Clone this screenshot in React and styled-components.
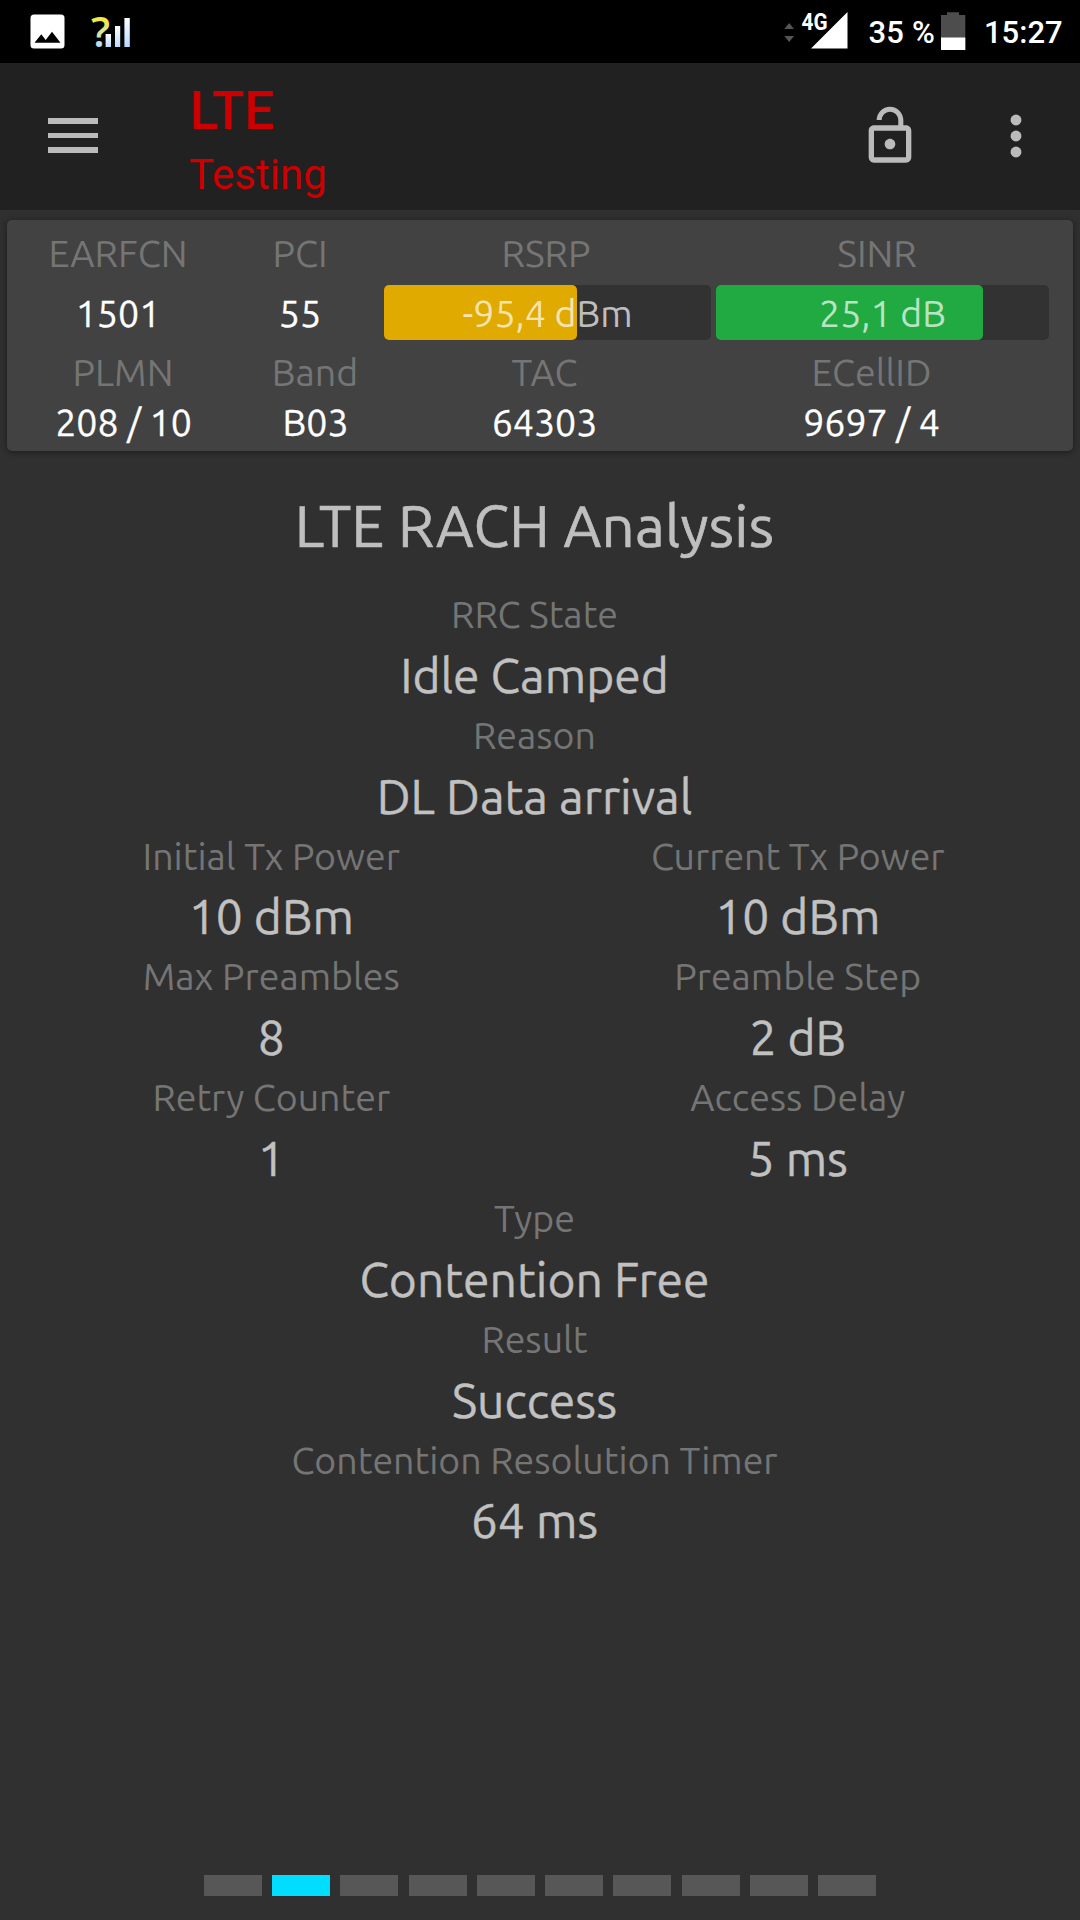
import React from 'react';
import styled, { createGlobalStyle } from 'styled-components';

const cellLabels = ['EARFCN', 'PCI', 'RSRP', 'SINR'];
const cellIds = ['1501', '55'];

const meters = [
  { reading: '-95,4 dBm', color: '#e0aa00', percent: 59.1 },
  { reading: '25,1 dB', color: '#22aa42', percent: 80.2 },
];

const networkLabels = ['PLMN', 'Band', 'TAC', 'ECellID'];
const networkValues = ['208 / 10', 'B03', '64303', '9697 / 4'];

const rachRows = [
  [{ label: 'RRC State', value: 'Idle Camped' }],
  [{ label: 'Reason', value: 'DL Data arrival' }],
  [
    { label: 'Initial Tx Power', value: '10 dBm' },
    { label: 'Current Tx Power', value: '10 dBm' },
  ],
  [
    { label: 'Max Preambles', value: '8' },
    { label: 'Preamble Step', value: '2 dB' },
  ],
  [
    { label: 'Retry Counter', value: '1' },
    { label: 'Access Delay', value: '5 ms' },
  ],
  [{ label: 'Type', value: 'Contention Free' }],
  [{ label: 'Result', value: 'Success' }],
  [{ label: 'Contention Resolution Timer', value: '64 ms' }],
];

const PAGE_COUNT = 10;
const ACTIVE_PAGE = 1;

const StatusBar = () => (
  <StyledStatusBar>
    <svg width="140" height="63" viewBox="0 0 140 63">
      <defs>
        <linearGradient id="question" x1="0" y1="0" x2="0" y2="1">
          <stop offset="0.25" stopColor="#ffe92e" />
          <stop offset="0.8" stopColor="#b5dcff" />
        </linearGradient>
        <linearGradient id="bars" x1="0" y1="0" x2="0" y2="1">
          <stop offset="0" stopColor="#fff" />
          <stop offset="1" stopColor="#b9dbff" />
        </linearGradient>
      </defs>
      <rect x="30.5" y="14.5" width="34" height="34" rx="3.5" fill="#fff" />
      <path d="M34.5 42.7 41.3 34.3 45.7 40 52 31.8 60.5 42.7Z" fill="#000" />
      <text x="91" y="46.5" className="question" fill="url(#question)">
        ?
      </text>
      <rect x="105.6" y="34" width="5.4" height="13" fill="url(#bars)" />
      <rect x="115" y="26" width="5.2" height="21" fill="url(#bars)" />
      <rect x="124.4" y="18" width="5.4" height="29" fill="url(#bars)" />
    </svg>
    <StatusRight>
      <svg width="64" height="63" viewBox="784 0 64 63">
        <path d="M784.3 29 789.2 23 794 29ZM784.3 36 789.2 42 794 36Z" fill="#555" />
        <path d="M811 48.5 847.5 12V48.5Z" fill="#fff" />
        <text x="801.5" y="30" className="network" textLength="26" lengthAdjust="spacingAndGlyphs">
          4G
        </text>
      </svg>
      <BatteryText>35 %</BatteryText>
      <svg width="25" height="63" viewBox="941 0 25 63">
        <path d="M947 12.3h12v2.7h6.3v35h-24.3v-35h6z" fill="#4d4d4d" />
        <path d="M941 37.5h24.3v12.5h-24.3z" fill="#fff" />
      </svg>
      <Clock>15:27</Clock>
    </StatusRight>
  </StyledStatusBar>
);

const Toolbar = () => (
  <StyledToolbar>
    <MenuButton aria-label="Menu">
      <span />
      <span />
      <span />
    </MenuButton>
    <Titles>
      <h1>LTE</h1>
      <h2>Testing</h2>
    </Titles>
    <ToolbarIcon viewBox="0 0 24 24">
      <path d="M12 17c1.1 0 2-.9 2-2s-.9-2-2-2-2 .9-2 2 .9 2 2 2zm6-9h-1V6c0-2.76-2.24-5-5-5S7 3.24 7 6h1.9c0-1.71 1.39-3.1 3.1-3.1 1.71 0 3.1 1.39 3.1 3.1v2H6c-1.1 0-2 .9-2 2v10c0 1.1.9 2 2 2h12c1.1 0 2-.9 2-2V10c0-1.1-.9-2-2-2zm0 12H6V10h12v10z" />
    </ToolbarIcon>
    <ToolbarIcon viewBox="0 0 24 24">
      <circle cx="12" cy="6" r="2.05" />
      <circle cx="12" cy="12" r="2.05" />
      <circle cx="12" cy="18" r="2.05" />
    </ToolbarIcon>
  </StyledToolbar>
);

const CellCard = () => (
  <StyledCellCard>
    <CardRow $columns="196px 168px 324px 338px">
      {cellLabels.map(item => (
        <CardLabel key={item}>{item}</CardLabel>
      ))}
    </CardRow>
    <MeterRow>
      {cellIds.map(item => (
        <CardValue key={item}>{item}</CardValue>
      ))}
      {meters.map(({ reading, color, percent }) => (
        <Meter key={reading} $color={color} $percent={percent}>
          <span>{reading}</span>
        </Meter>
      ))}
    </MeterRow>
    <CardRow $columns="206px 178px 281px 373px">
      {networkLabels.map(item => (
        <CardLabel key={item}>{item}</CardLabel>
      ))}
    </CardRow>
    <CardRow $columns="207px 177px 281px 373px" $gap={6}>
      {networkValues.map(item => (
        <CardValue key={item}>{item}</CardValue>
      ))}
    </CardRow>
  </StyledCellCard>
);

const App = () => (
  <Screen>
    <GlobalStyle />
    <StatusBar />
    <Toolbar />
    <CellCard />
    <Analysis>
      <Heading>LTE RACH Analysis</Heading>
      {rachRows.map(row => (
        <FieldRow key={row[0].label}>
          {row.map(({ label, value }) => (
            <Field key={label}>
              <FieldLabel>{label}</FieldLabel>
              <FieldValue>{value}</FieldValue>
            </Field>
          ))}
        </FieldRow>
      ))}
    </Analysis>
    <Pager>
      {Array.from({ length: PAGE_COUNT }, (_, i) => (
        <PagerMark key={i} $active={i === ACTIVE_PAGE} />
      ))}
    </Pager>
  </Screen>
);

const GlobalStyle = createGlobalStyle`
  * {
    box-sizing: border-box;
  }
  body {
    margin: 0;
    background: #303030;
  }
  h1, h2, p {
    margin: 0;
    font-weight: 400;
  }
`;

const Screen = styled.div`
  display: flex;
  flex-direction: column;
  width: 1080px;
  height: 1920px;
  overflow: hidden;
  background: #303030;
  font-family: Ubuntu, 'Noto Sans', sans-serif;
`;

const StyledStatusBar = styled.div`
  display: flex;
  justify-content: space-between;
  height: 63px;
  background: #000;
  color: #fff;
  font-family: Roboto, sans-serif;
  .question {
    font-family: 'Open Sans', sans-serif;
    font-size: 42px;
    font-weight: 600;
  }
  .network {
    font-size: 24px;
    font-weight: 700;
    fill: #fff;
    stroke: #000;
    stroke-width: 3px;
    paint-order: stroke;
  }
`;

const StatusRight = styled.div`
  display: flex;
  width: 296px;
  font-size: 31px;
  font-weight: 500;
  line-height: 66px;
  white-space: pre;
`;

const BatteryText = styled.span`
  width: 93px;
  padding-left: 20.5px;
  letter-spacing: 0.2px;
`;

const Clock = styled.span`
  padding-left: 18px;
`;

const StyledToolbar = styled.header`
  display: flex;
  height: 147px;
  padding: 0 32px 0 48px;
  background: #212121;
`;

const MenuButton = styled.button`
  display: flex;
  flex-direction: column;
  justify-content: center;
  gap: 9px;
  width: 50px;
  height: 147px;
  padding: 0 0 2px;
  border: 0;
  background: none;
  span {
    height: 5.5px;
    background: #bbb;
  }
`;

const Titles = styled.div`
  flex: 1;
  padding: 17px 0 0 91px;
  color: #c00;
  font-family: Roboto, sans-serif;
  h1 {
    margin-bottom: 8px;
    padding-left: 1px;
    font-size: 53px;
    font-weight: 500;
    line-height: 62px;
  }
  h2 {
    font-size: 42px;
    line-height: 50px;
  }
`;

const ToolbarIcon = styled.svg`
  width: 64px;
  height: 64px;
  margin-top: 40.5px;
  fill: #bbb;
  & + & {
    margin-left: 62px;
  }
`;

const StyledCellCard = styled.section`
  height: 231px;
  margin: 10px 7px 0;
  padding: 11px 0 0 13px;
  border-radius: 5px;
  background: #424242;
  box-shadow: 0 1px 6px rgba(0, 0, 0, 0.45);
`;

const CardRow = styled.div`
  display: grid;
  grid-template-columns: ${({ $columns }) => $columns};
  margin-top: ${({ $gap = 0 }) => $gap}px;
`;

const MeterRow = styled.div`
  display: grid;
  grid-template-columns: 196px 168px 327px 333px;
  margin: 10px 0;
  p {
    line-height: 56px;
  }
  & > :last-child {
    margin-left: 5px;
    margin-right: -5px;
  }
`;

const CenteredText = styled.p`
  text-align: center;
  white-space: pre;
`;

const CardLabel = styled(CenteredText)`
  color: #757575;
  font-size: 37.5px;
  line-height: 44px;
`;

const CardValue = styled(CenteredText)`
  height: 44px;
  color: #fff;
  font-size: 37.5px;
  line-height: 44px;
  -webkit-text-stroke: 0.3px #fff;
`;

const Meter = styled.div`
  display: grid;
  height: 55px;
  border-radius: 5px;
  background: #323232;
  color: rgba(255, 255, 255, 0.7);
  font-size: 37.5px;
  line-height: 56px;
  &::before {
    content: '';
    grid-area: 1 / 1;
    width: ${({ $percent }) => $percent}%;
    height: 55px;
    border-radius: 5px;
    background: ${({ $color }) => $color};
  }
  span {
    grid-area: 1 / 1;
    text-align: center;
    white-space: pre;
  }
`;

const Analysis = styled.main`
  flex: 1;
  width: 1053px;
  margin: 35px 0 0 8px;
`;

const Heading = styled(CenteredText)`
  margin-bottom: 20px;
  color: #bfbfbf;
  font-size: 58px;
  line-height: 80px;
  letter-spacing: 0.3px;
  -webkit-text-stroke: 0.7px #bfbfbf;
`;

const FieldRow = styled.div`
  display: flex;
`;

const Field = styled.div`
  flex: 1;
`;

const FieldLabel = styled(CenteredText)`
  color: #757575;
  font-size: 37.5px;
  line-height: 56.8px;
`;

const FieldValue = styled(CenteredText)`
  color: #c1c1c1;
  font-size: 48px;
  line-height: 64px;
  -webkit-text-stroke: 0.4px #c1c1c1;
`;

const Pager = styled.nav`
  display: flex;
  justify-content: center;
  gap: 10.25px;
  height: 45px;
`;

const PagerMark = styled.span`
  width: 58px;
  height: 21px;
  background: ${({ $active }) => ($active ? '#00ddff' : '#575757')};
`;

export default App;
